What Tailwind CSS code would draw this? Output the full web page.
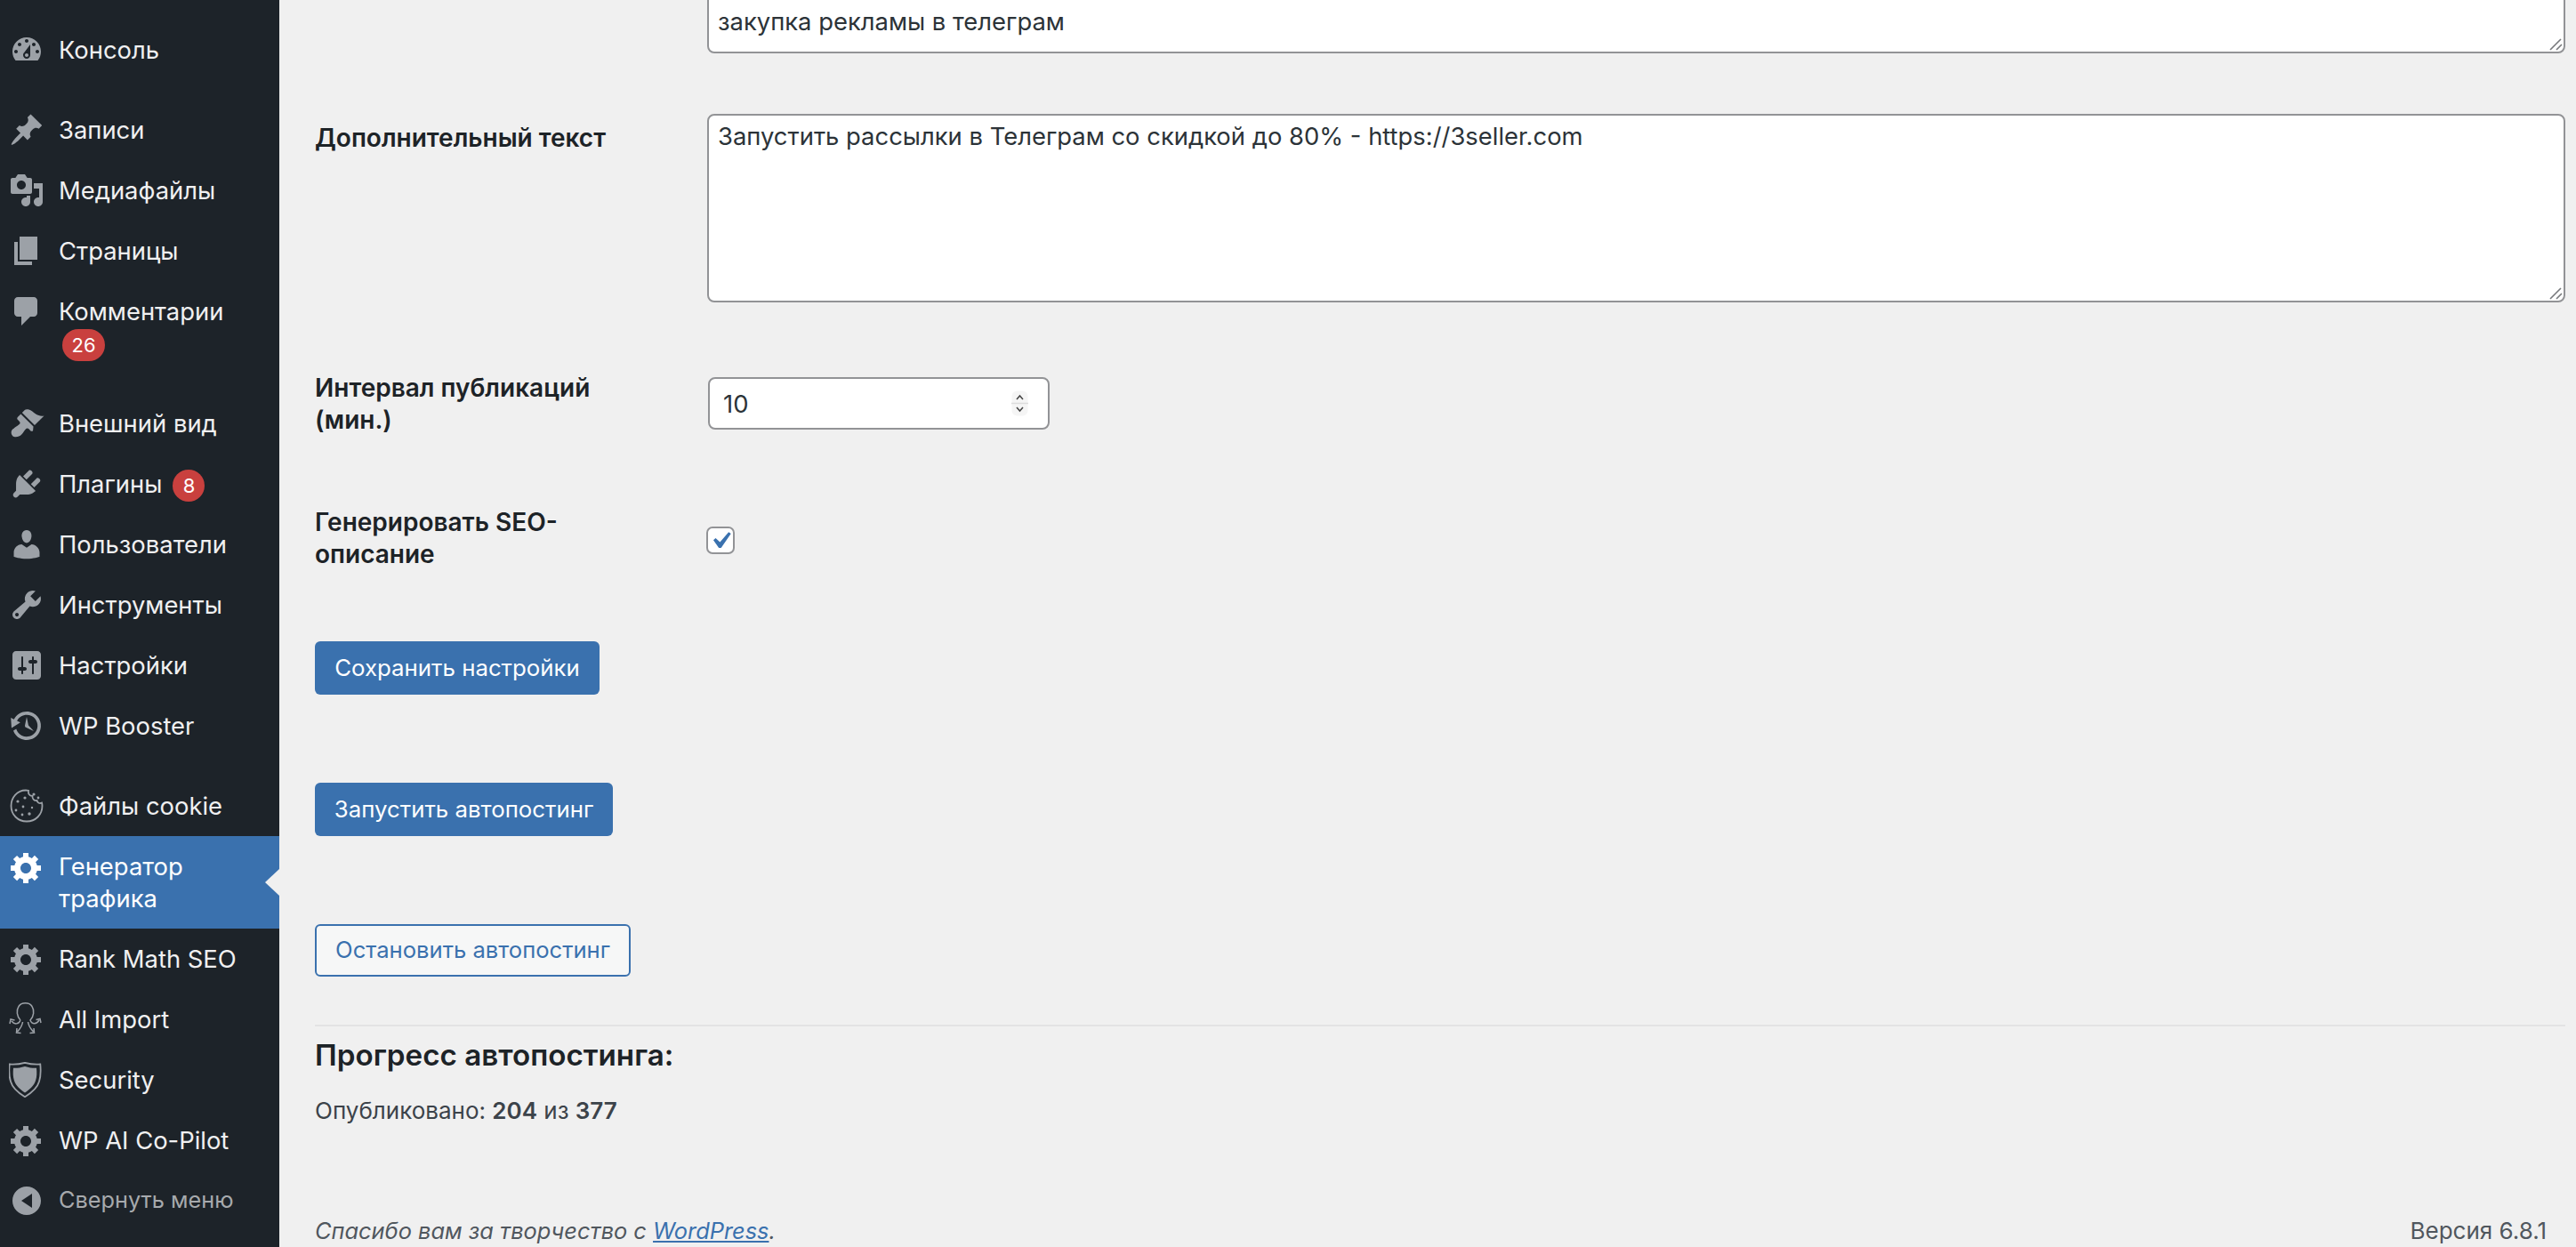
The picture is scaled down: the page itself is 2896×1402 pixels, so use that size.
<!doctype html>
<html lang="ru">
<head>
<meta charset="utf-8">
<script src="https://cdn.jsdelivr.net/npm/@tailwindcss/browser@4"></script>
</head>
<body class="m-0 bg-[#f0f0f0]">
<div class="flex w-[2896px] h-[1402px] overflow-hidden bg-[#f0f0f0] text-[#3c434a] font-['Inter','Liberation_Sans',sans-serif]">
  <aside class="w-[314px] shrink-0 h-full bg-[#1d2329] pt-[22px] text-[27.4px] text-[#f0f0f1] flex flex-col">
    <a class="flex items-start h-[68px] pl-[10px] gap-[16px]"><svg class="w-10 h-10 mt-[14px] shrink-0 fill-[#9ca1a7]" viewBox="0 0 20 20"><path d="M3.76 16h12.48c1.1-1.37 1.76-3.11 1.76-5 0-4.42-3.58-8-8-8s-8 3.58-8 8c0 1.89.66 3.63 1.76 5zM10 4c.55 0 1 .45 1 1s-.45 1-1 1-1-.45-1-1 .45-1 1-1zM6 6c.55 0 1 .45 1 1s-.45 1-1 1-1-.45-1-1 .45-1 1-1zm8 0c.55 0 1 .45 1 1s-.45 1-1 1-1-.45-1-1 .45-1 1-1zm-5.37 5.55L12 7v6c0 1.1-.9 2-2 2s-2-.9-2-2c0-.57.24-1.08.63-1.45zM4 10c.55 0 1 .45 1 1s-.45 1-1 1-1-.45-1-1 .45-1 1-1zm12 0c.55 0 1 .45 1 1s-.45 1-1 1-1-.45-1-1 .45-1 1-1zm-5 3c0-.55-.45-1-1-1s-1 .45-1 1 .45 1 1 1 1-.45 1-1z"/></svg><span class="mt-[16px] leading-[36px]">Консоль</span></a>
    <a class="mt-[22px] flex items-start h-[68px] pl-[10px] gap-[16px]"><svg class="w-10 h-10 mt-[14px] shrink-0 fill-[#9ca1a7]" viewBox="0 0 20 20"><path d="M10.44 3.02l1.82-1.82 6.36 6.35-1.83 1.82c-1.05-.68-2.48-.57-3.41.36l-.75.75c-.92.93-1.04 2.35-.35 3.41l-1.83 1.82-2.41-2.41-2.8 2.79c-.42.42-3.38 2.71-3.8 2.29s1.86-3.39 2.28-3.81l2.79-2.79L4.1 9.36l1.83-1.82c1.05.69 2.48.57 3.4-.36l.75-.75c.93-.92 1.05-2.35.36-3.41z"/></svg><span class="mt-[16px] leading-[36px]">Записи</span></a>
    <a class="flex items-start h-[68px] pl-[10px] gap-[16px]"><svg class="w-10 h-10 mt-[14px] shrink-0 fill-[#9ca1a7]" viewBox="0 0 20 20"><path d="M13 11V4c0-.55-.45-1-1-1h-1.67L9 1H5L3.67 3H2c-.55 0-1 .45-1 1v7c0 .55.45 1 1 1h10c.55 0 1-.45 1-1zM7 4.5c1.38 0 2.5 1.12 2.5 2.5S8.38 9.5 7 9.5 4.5 8.38 4.5 7 5.62 4.5 7 4.5zM14 6h5v10.5c0 1.38-1.12 2.5-2.5 2.5S14 17.88 14 16.5s1.12-2.5 2.5-2.5c.17 0 .34.02.5.05V9h-3V6zm-4 8.05V13h2v3.5c0 1.38-1.12 2.5-2.5 2.5S7 17.88 7 16.5 8.12 14 9.5 14c.17 0 .34.02.5.05z"/></svg><span class="mt-[16px] leading-[36px]">Медиафайлы</span></a>
    <a class="flex items-start h-[68px] pl-[10px] gap-[16px]"><svg class="w-10 h-10 mt-[14px] shrink-0 fill-[#9ca1a7]" viewBox="0 0 20 20"><path d="M6 15V2h10v13H6zm-1 1h8v2H3V5h2v11z"/></svg><span class="mt-[16px] leading-[36px]">Страницы</span></a>
    <a class="flex items-start h-[126px] pl-[10px] gap-[16px]"><svg class="w-10 h-10 mt-[14px] shrink-0 fill-[#9ca1a7]" viewBox="0 0 20 20"><path d="M5 2h9c1.1 0 2 .9 2 2v7c0 1.1-.9 2-2 2h-2l-5 5v-5H5c-1.1 0-2-.9-2-2V4c0-1.1.9-2 2-2z"/></svg><span class="mt-[16px] leading-[36px] flex flex-col items-start"><span>Комментарии</span><span class="ml-[4px] mt-[2px] w-[48px] h-[36px] rounded-full bg-[#c9403e] text-white text-[22px] leading-[36px] text-center">26</span></span></a>
    <a class="flex items-start h-[68px] pl-[10px] gap-[16px]"><svg class="w-10 h-10 mt-[14px] shrink-0 fill-[#9ca1a7]" viewBox="0 0 20 20"><path d="M14.48 11.06L7.41 3.99l1.5-1.5c.5-.56 2.3-.47 3.51.32 1.21.8 1.43 1.28 2.91 2.1 1.18.64 2.45 1.26 4.45.85zm-.71.71L6.7 4.7 4.93 6.47c-.39.39-.39 1.02 0 1.41l1.06 1.06c.39.39.39 1.03 0 1.42-.6.6-1.43 1.11-2.21 1.69-.35.26-.7.53-1.01.84C1.43 13.23.75 15.66 2.06 16.97c1.3 1.3 3.74.62 5.07-.7.31-.31.58-.66.84-1.01.58-.78 1.09-1.61 1.69-2.21.39-.39 1.02-.39 1.41 0l1.06 1.06c.39.39 1.02.39 1.41 0z"/></svg><span class="mt-[16px] leading-[36px]">Внешний вид</span></a>
    <a class="flex items-start h-[68px] pl-[10px] gap-[16px]"><svg class="w-10 h-10 mt-[14px] shrink-0 fill-[#9ca1a7]" viewBox="0 0 20 20"><path d="M13.11 4.36L9.87 7.6 8 5.73l3.24-3.24c.35-.34 1.05-.2 1.56.32.52.51.66 1.21.31 1.55zm-8 1.77l.91-1.12 9.01 9.01-1.19.84c-.71.71-2.63 1.16-3.82 1.16H6.14L4.9 17.26c-.59.59-1.54.59-2.12 0-.59-.58-.59-1.53 0-2.12l1.24-1.24v-3.88c0-1.13.4-3.19 1.09-3.89zm7.26 3.97l3.24-3.24c.34-.35 1.04-.21 1.55.31.52.51.66 1.21.31 1.55l-3.24 3.25z"/></svg><span class="mt-[16px] leading-[36px]">Плагины</span><span class="mt-[18px] -ml-[4px] w-[36px] h-[36px] rounded-full bg-[#c9403e] text-white text-[22px] leading-[36px] text-center">8</span></a>
    <a class="flex items-start h-[68px] pl-[10px] gap-[16px]"><svg class="w-10 h-10 mt-[14px] shrink-0 fill-[#9ca1a7]" viewBox="0 0 20 20"><path d="M10 9.25c-2.27 0-2.73-3.44-2.73-3.44C7 4.02 7.82 2 9.97 2c2.16 0 2.98 2.02 2.71 3.81 0 0-.41 3.44-2.68 3.44zm0 2.57L12.72 10c2.39 0 4.52 2.33 4.52 4.53v2.49s-3.65 1.13-7.24 1.13c-3.65 0-7.24-1.13-7.24-1.13v-2.49c0-2.25 1.94-4.48 4.47-4.48z"/></svg><span class="mt-[16px] leading-[36px]">Пользователи</span></a>
    <a class="flex items-start h-[68px] pl-[10px] gap-[16px]"><svg class="w-10 h-10 mt-[14px] shrink-0 fill-[#9ca1a7]" viewBox="0 0 20 20"><path d="M16.68 9.77c-1.34 1.34-3.3 1.67-4.95.99l-5.41 6.52c-.99.99-2.59.99-3.58 0s-.99-2.59 0-3.57l6.52-5.42c-.68-1.65-.35-3.61.99-4.95 1.28-1.28 3.12-1.62 4.72-1.06l-2.89 2.89 2.82 2.82 2.86-2.87c.53 1.58.18 3.39-1.08 4.65zM3.81 16.21c.4.39 1.04.39 1.43 0 .4-.4.4-1.04 0-1.43-.39-.4-1.03-.4-1.43 0-.39.39-.39 1.03 0 1.43z"/></svg><span class="mt-[16px] leading-[36px]">Инструменты</span></a>
    <a class="flex items-start h-[68px] pl-[10px] gap-[16px]"><svg class="w-10 h-10 mt-[14px] shrink-0 fill-[#9ca1a7]" viewBox="0 0 20 20"><path d="M18 16V4c0-1.1-.9-2-2-2H4c-1.1 0-2 .9-2 2v12c0 1.1.9 2 2 2h12c1.1 0 2-.9 2-2zM8 11h1c.55 0 1 .45 1 1s-.45 1-1 1H8v1.5c0 .28-.22.5-.5.5s-.5-.22-.5-.5V13H6c-.55 0-1-.45-1-1s.45-1 1-1h1V5.5c0-.28.22-.5.5-.5s.5.22.5.5V11zm5-2h-1c-.55 0-1-.45-1-1s.45-1 1-1h1V5.500c0-.28.22-.5.5-.5s.5.22.5.5V7h1c.55 0 1 .45 1 1s-.45 1-1 1h-1v5.500c0 .28-.22.5-.5.5s-.5-.22-.5-.5V9z"/></svg><span class="mt-[16px] leading-[36px]">Настройки</span></a>
    <a class="flex items-start h-[68px] pl-[10px] gap-[16px]"><svg class="w-10 h-10 mt-[14px] shrink-0 fill-[#9ca1a7]" viewBox="0 0 20 20"><path d="M13.65 2.88c3.93 2.01 5.48 6.84 3.47 10.77s-6.83 5.48-10.77 3.47c-1.87-.96-3.2-2.56-3.86-4.4l1.64-1.03c.45 1.57 1.52 2.95 3.08 3.76 3.01 1.54 6.69.35 8.23-2.66 1.55-3.01.36-6.69-2.65-8.24C9.78 3.01 6.1 4.2 4.56 7.21l1.88.97-4.95 3.08-.39-5.82 1.78.91C4.89 2.42 9.72.87 13.65 2.88zm-4.36 7.83C9.11 10.53 9 10.28 9 10c0-.07.03-.12.04-.19h-.01L10 5l.97 4.81L14 13l-4.5-2.12.02-.02c-.08-.04-.16-.09-.23-.15z"/></svg><span class="mt-[16px] leading-[36px]">WP Booster</span></a>
    <a class="mt-[22px] flex items-start h-[68px] pl-[10px] gap-[16px]"><svg class="w-10 h-10 mt-[14px] shrink-0 fill-[#9ca1a7]" viewBox="0 0 40 40"><path fill="none" stroke="#9ca1a7" stroke-width="1.8" d="M19 2.500 C9 2.500 2.500 11 2.500 20 C2.500 30 10 37.500 20 37.500 C30 37.500 37.500 30 37.500 20 C37.500 18.500 37.300 17.500 37 16.500 C34.500 18 32 16.500 31.500 14 C28.500 14.500 26 12 26.500 9 C23 9 21.500 6.500 22 2.800 C21 2.600 20 2.500 19 2.500Z"/><circle cx="10" cy="15" r="1.600"/><circle cx="8" cy="25" r="1.400"/><circle cx="16" cy="21" r="1.400"/><circle cx="18" cy="11" r="1.600"/><circle cx="15" cy="30" r="1.400"/><circle cx="23" cy="29" r="1.700"/><circle cx="28" cy="7" r="1.600"/><circle cx="33" cy="11" r="1.400"/><circle cx="26" cy="22" r="1.200"/></svg><span class="mt-[16px] leading-[36px]">Файлы cookie</span></a>
    <a class="relative flex items-start h-[104px] pl-[10px] gap-[16px] bg-[#3a71ae] text-white"><svg class="w-10 h-10 mt-[15px] shrink-0 fill-white" viewBox="0 0 20 20"><path d="M18 12h-2.18c-.17.7-.44 1.35-.81 1.93l1.54 1.54-2.1 2.1-1.54-1.54c-.58.36-1.23.63-1.91.79V19H8v-2.18c-.68-.16-1.33-.43-1.91-.79l-1.54 1.54-2.12-2.12 1.54-1.54c-.36-.58-.63-1.23-.79-1.91H1V9.03h2.17c.16-.7.44-1.35.8-1.94L2.43 5.55l2.1-2.1 1.54 1.54c.58-.37 1.24-.64 1.93-.81V2h3v2.18c.68.16 1.33.43 1.91.79l1.54-1.54 2.12 2.12-1.54 1.54c.36.59.64 1.24.8 1.94H18V12zm-8.5 1.5c1.66 0 3-1.34 3-3s-1.34-3-3-3-3 1.34-3 3 1.34 3 3 3z"/></svg><span class="mt-[16px] leading-[36px]">Генератор<br>трафика</span><span class="absolute right-0 top-[37px] w-0 h-0 border-y-[15px] border-y-transparent border-r-[16px] border-r-[#f0f0f0]"></span></a>
    <a class="flex items-start h-[68px] pl-[10px] gap-[16px]"><svg class="w-10 h-10 mt-[14px] shrink-0 fill-[#9ca1a7]" viewBox="0 0 20 20"><path d="M18 12h-2.18c-.17.7-.44 1.35-.81 1.93l1.54 1.54-2.1 2.1-1.54-1.54c-.58.36-1.23.63-1.91.79V19H8v-2.18c-.68-.16-1.33-.43-1.91-.79l-1.54 1.54-2.12-2.12 1.54-1.54c-.36-.58-.63-1.23-.79-1.91H1V9.03h2.17c.16-.7.44-1.35.8-1.94L2.43 5.55l2.1-2.1 1.54 1.54c.58-.37 1.24-.64 1.93-.81V2h3v2.18c.68.16 1.33.43 1.91.79l1.54-1.54 2.12 2.12-1.54 1.54c.36.59.64 1.24.8 1.94H18V12zm-8.5 1.5c1.66 0 3-1.34 3-3s-1.34-3-3-3-3 1.34-3 3 1.34 3 3 3z"/></svg><span class="mt-[16px] leading-[36px]">Rank Math SEO</span></a>
    <a class="flex items-start h-[68px] pl-[10px] gap-[16px]"><svg class="w-10 h-10 mt-[14px] shrink-0" viewBox="0 0 40 40" fill="none" stroke="#9ca1a7" stroke-width="1.500"><path d="M13 21 C9 17 8 10 11 5.500 C14 .5 23 .5 26 5.500 C29 10 28 17 24 21 C26 26 31 26 34 21 M30.500 20.500 L35 19.500 L36 24 M13 21 C11 26 6 26 3 22 M1 25 L2 20 L6.500 21 M15.500 23 C15 28 12 31 9.500 34 M9 30 L8.500 35 L13.500 35.500 M21.500 23 C22 28 25 31 27.500 34 M28 30 L28.500 35 L23.500 35.500"/></svg><span class="mt-[16px] leading-[36px]">All Import</span></a>
    <a class="flex items-start h-[68px] pl-[10px] gap-[16px]"><svg class="w-10 h-10 mt-[14px] shrink-0" viewBox="0 0 40 40" fill="#9ca1a7"><path fill="none" stroke="#9ca1a7" stroke-width="1.800" d="M18 .8 C24 2.500 30 3 35.300 2.500 C36 10 36 16 34 22 C32 29 25 35 18 39.200 C11 35 4 29 2 22 C0 16 0 10 .7 2.500 C6 3 12 2.500 18 .8Z"/><path d="M18 5 C23 6.500 27 7 31 6.800 C31.500 12 31.500 17 30 21 C28 27 23 31 18 34.500 C13 31 8 27 6 21 C4.500 17 4.500 12 5 6.800 C9 7 13 6.500 18 5Z"/></svg><span class="mt-[16px] leading-[36px]">Security</span></a>
    <a class="flex items-start h-[68px] pl-[10px] gap-[16px]"><svg class="w-10 h-10 mt-[14px] shrink-0 fill-[#9ca1a7]" viewBox="0 0 20 20"><path d="M18 12h-2.18c-.17.7-.44 1.35-.81 1.93l1.54 1.54-2.1 2.1-1.54-1.54c-.58.36-1.23.63-1.91.79V19H8v-2.18c-.68-.16-1.33-.43-1.91-.79l-1.54 1.54-2.12-2.12 1.54-1.54c-.36-.58-.63-1.23-.79-1.91H1V9.03h2.17c.16-.7.44-1.35.8-1.94L2.43 5.55l2.1-2.1 1.54 1.54c.58-.37 1.24-.64 1.93-.81V2h3v2.18c.68.16 1.33.43 1.91.79l1.54-1.54 2.12 2.12-1.54 1.54c.36.59.64 1.24.8 1.94H18V12zm-8.5 1.5c1.66 0 3-1.34 3-3s-1.34-3-3-3-3 1.34-3 3 1.34 3 3 3z"/></svg><span class="mt-[16px] leading-[36px]">WP AI Co-Pilot</span></a>
    <a class="flex items-start h-[68px] pl-[10px] gap-[16px] text-[#a7aaad] text-[25.3px]"><svg class="w-10 h-10 mt-[14px] shrink-0 fill-[#9ca1a7]" viewBox="0 0 20 20"><path d="M18 10c0-4.420-3.580-8-8-8s-8 3.580-8 8 3.580 8 8 8 8-3.580 8-8zm-5-4v8l-6-4z"/></svg><span class="mt-[15px] leading-[36px]">Свернуть меню</span></a>
  </aside>
  <main class="flex-1 min-w-0 pl-[40px] pr-[12px] text-[26px]">
    <div class="grid grid-cols-[441px_1fr] -mt-[40px]">
      <div></div>
      <div class="relative h-[100px]">
        <textarea class="block w-full h-full resize-none border-2 border-[#929396] rounded-[8px] bg-white px-[10px] pt-[44px] text-[27.4px] leading-[36px] text-[#2c3338] outline-none">закупка рекламы в телеграм</textarea>
        <svg class="absolute right-[3px] bottom-[3px] w-[16px] h-[16px]" viewBox="0 0 16 16" fill="none" stroke="#77797c" stroke-width="1.600"><path d="M2 15L14 3M9 15L15 9"/></svg>
      </div>
    </div>
    <div class="grid grid-cols-[441px_1fr] mt-[68px]">
      <div class="self-start pt-[9px] font-semibold text-[28px] text-[#1d2327] leading-[36px]">Дополнительный текст</div>
      <div class="relative h-[212px]">
        <textarea class="block w-full h-full resize-none border-2 border-[#929396] rounded-[8px] bg-white px-[10px] pt-[5px] text-[27.4px] leading-[36px] text-[#2c3338] outline-none">Запустить рассылки в Телеграм со скидкой до 80% - https://3seller.com</textarea>
        <svg class="absolute right-[3px] bottom-[3px] w-[16px] h-[16px]" viewBox="0 0 16 16" fill="none" stroke="#77797c" stroke-width="1.600"><path d="M2 15L14 3M9 15L15 9"/></svg>
      </div>
    </div>
    <div class="grid grid-cols-[441px_1fr] mt-[78px] items-start">
      <div class="font-semibold text-[28px] text-[#1d2327] leading-[36px] w-[340px]">Интервал публикаций (мин.)</div>
      <div class="relative mt-[6px] ml-[1px] w-[384px] h-[59px]">
        <input type="number" value="10" class="block w-full h-full border-2 border-[#929396] rounded-[8px] bg-white pl-[15px] pr-[40px] text-[27.4px] text-[#2c3338] outline-none [appearance:textfield]">
        <svg class="absolute left-[341px] top-[15px] w-[19px] h-[29px]" viewBox="0 0 19 29" fill="none"><rect x="0.500" y="0.500" width="18" height="28" rx="6" fill="#f5f5f5"/><path d="M0 14.500H19" stroke="#dcdcdc" stroke-width="1.500"/><path d="M6 10L9.500 6L13 10M6 19L9.500 23L13 19" stroke="#444" stroke-width="1.500"/></svg>
      </div>
    </div>
    <div class="grid grid-cols-[441px_1fr] mt-[79px] items-start">
      <div class="font-semibold text-[28px] text-[#1d2327] leading-[36px] w-[320px]">Генерировать SEO-описание</div>
      <div class="mt-[23px] ml-[-1px] w-[32px] h-[31px] rounded-[7px] border-2 border-[#929396] bg-white flex items-center justify-center overflow-visible">
        <svg class="w-[38px] h-[38px] shrink-0 fill-[#3a71ae]" viewBox="0 0 20 20"><path d="M14.830 4.890l1.340.940-5.810 8.380H9.020L5.780 9.670l1.340-1.250 2.570 2.400z"/></svg>
      </div>
    </div>
    <button class="block mt-[80px] h-[60px] w-[320px] rounded-[6px] bg-[#3a71ae] text-white text-[25.8px]">Сохранить настройки</button>
    <button class="block mt-[99px] h-[60px] w-[335px] rounded-[6px] bg-[#3a71ae] text-white text-[25.8px]">Запустить автопостинг</button>
    <button class="block mt-[99px] h-[59px] w-[355px] rounded-[6px] border-2 border-[#3a71ae] bg-[#f6f7f7] text-[#3a71ae] text-[25.6px]">Остановить автопостинг</button>
    <div class="mt-[54px] h-[2px] bg-[#e3e3e4]"></div>
    <h2 class="mt-[12px] text-[33.2px] leading-[40px] font-semibold text-[#1d2327]">Прогресс автопостинга:</h2>
    <p class="mt-[25px] leading-[36px]">Опубликовано: <strong class="font-semibold">204</strong> из <strong class="font-semibold">377</strong></p>
    <footer class="mt-[99px] flex justify-between pr-[21px] leading-[36px] text-[#50575e]">
      <span class="italic text-[25.4px]">Спасибо вам за творчество с <a class="underline text-[#3a71ae]">WordPress</a>.</span>
      <span>Версия 6.8.1</span>
    </footer>
  </main>
</div>
</body>
</html>
